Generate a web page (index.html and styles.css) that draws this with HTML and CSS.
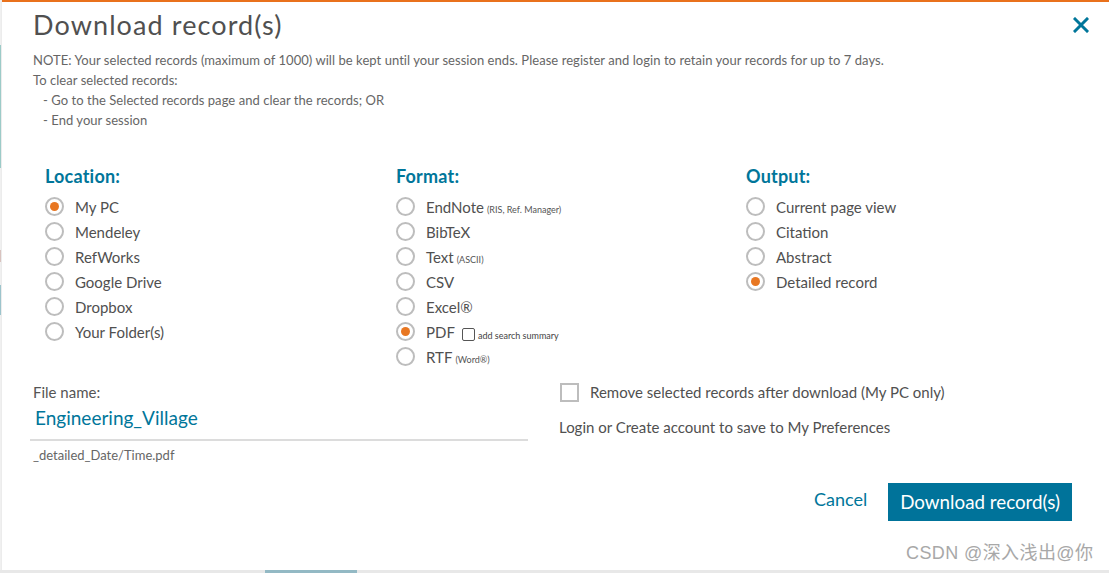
FILE: index.html
```html
<!DOCTYPE html>
<html>
<head>
<meta charset="utf-8">
<link rel="stylesheet" href="styles.css">
</head>
<body>
<div class="edge"></div>
<div class="dialog">
  <div class="topbar"></div>
  <div class="header">
    <h1 class="title">Download record(s)</h1>
    <svg class="close" width="16" height="16" viewBox="0 0 16 16"><path d="M2 2 L14 14 M14 2 L2 14" stroke="#00769a" stroke-width="3" stroke-linecap="square"/></svg>
  </div>
  <div class="note">
    <div>NOTE: Your selected records (maximum of 1000) will be kept until your session ends. Please register and login to retain your records for up to 7 days.</div>
    <div>To clear selected records:</div>
    <div class="indent">- Go to the Selected records page and clear the records; OR</div>
    <div class="indent">- End your session</div>
  </div>

  <div class="columns">
    <div class="col">
      <div class="heading">Location:</div>
      <div class="opts">
        <div class="opt"><span class="radio on"></span>My PC</div>
        <div class="opt"><span class="radio"></span>Mendeley</div>
        <div class="opt"><span class="radio"></span>RefWorks</div>
        <div class="opt"><span class="radio"></span>Google Drive</div>
        <div class="opt"><span class="radio"></span>Dropbox</div>
        <div class="opt"><span class="radio"></span>Your Folder(s)</div>
      </div>
    </div>
    <div class="col">
      <div class="heading">Format:</div>
      <div class="opts">
        <div class="opt"><span class="radio"></span>EndNote<small>(RIS, Ref. Manager)</small></div>
        <div class="opt"><span class="radio"></span>BibTeX</div>
        <div class="opt"><span class="radio"></span>Text<small>(ASCII)</small></div>
        <div class="opt"><span class="radio"></span>CSV</div>
        <div class="opt"><span class="radio"></span>Excel®</div>
        <div class="opt"><span class="radio on"></span>PDF<span class="mini-check"></span><span class="mini-label">add search summary</span></div>
        <div class="opt"><span class="radio"></span>RTF<small>(Word®)</small></div>
      </div>
    </div>
    <div class="col">
      <div class="heading">Output:</div>
      <div class="opts">
        <div class="opt"><span class="radio"></span>Current page view</div>
        <div class="opt"><span class="radio"></span>Citation</div>
        <div class="opt"><span class="radio"></span>Abstract</div>
        <div class="opt"><span class="radio on"></span>Detailed record</div>
      </div>
    </div>
  </div>

  <div class="filerow">
    <div class="file">
      <div class="file-label">File name:</div>
      <div class="file-input">Engineering_Village</div>
      <div class="file-suffix">_detailed_Date/Time.pdf</div>
    </div>
    <div class="prefs">
      <div class="check-row"><span class="checkbox"></span>Remove selected records after download (My PC only)</div>
      <div class="login">Login or Create account to save to My Preferences</div>
    </div>
  </div>

  <div class="actions">
    <span class="cancel">Cancel</span>
    <span class="btn">Download record(s)</span>
  </div>
</div>
<div class="watermark">CSDN @深入浅出@你</div>
<div class="scrollbar"><div class="thumb"></div></div>
</body>
</html>
```

FILE: styles.css
```css
html, body {
  margin: 0;
  padding: 0;
  background: #fff;
}
body {
  width: 1109px;
  height: 573px;
  overflow: hidden;
  position: relative;
  font-family: Lato, "Noto Sans", sans-serif;
  color: #505050;
}
.edge {
  position: absolute;
  left: 0;
  top: 0;
  width: 1px;
  height: 573px;
  background: linear-gradient(to bottom, #f0f0f0 0, #f0f0f0 45px, #9ccbc8 45px, #9ccbc8 168px, #f0f0f0 168px, #f0f0f0 250px, #d9c3bf 250px, #d9c3bf 262px, #f0f0f0 262px, #f0f0f0 285px, #9cc4cc 285px, #9cc4cc 315px, #f0f0f0 315px);
  border-right: 1px solid #ececec;
}
.dialog {
  display: flex;
  flex-direction: column;
}
.topbar {
  height: 2px;
  background: #e9711c;
}
.header {
  height: 48px;
  display: flex;
  align-items: center;
  justify-content: space-between;
  padding: 0 20px 0 33px;
}
.title {
  margin: 0;
  font-weight: 400;
  font-size: 27px;
  letter-spacing: 1.1px;
  color: #505050;
  line-height: 30px;
  margin-top: -3px;
}
.close {
  display: block;
  margin-top: -3px;
}
.note {
  padding-left: 33px;
  font-size: 13px;
  letter-spacing: 0.05px;
  line-height: 20px;
  color: #666;
}
.note .indent {
  padding-left: 10px;
}
.columns {
  margin-top: 36px;
  padding-left: 45px;
  display: grid;
  grid-template-columns: 351px 350px 1fr;
}
.heading {
  font-size: 18px;
  letter-spacing: 0.2px;
  font-weight: 700;
  color: #00769a;
  line-height: 20px;
}
.opts {
  margin-top: 8px;
  display: flex;
  flex-direction: column;
}
.opt {
  height: 25px;
  display: flex;
  align-items: center;
  font-size: 15px;
  color: #505050;
}
.opt small {
  font-size: 9px;
  margin-left: 3px;
  margin-top: 5px;
  color: #555;
}
.radio {
  width: 15px;
  height: 15px;
  border: 2px solid #bdbdbd;
  border-radius: 50%;
  margin-right: 11px;
  flex: none;
  position: relative;
  background: #fff;
}
.radio.on::after {
  content: "";
  position: absolute;
  left: 3px;
  top: 3px;
  width: 9px;
  height: 9px;
  border-radius: 50%;
  background: #e87722;
}
.mini-check {
  width: 11px;
  height: 11px;
  border: 1px solid #555;
  border-radius: 2px;
  margin-left: 7px;
  margin-top: 6px;
}
.mini-label {
  font-size: 9px;
  margin-left: 3px;
  margin-top: 8px;
  color: #444;
}
.filerow {
  margin-top: 13px;
  display: grid;
  grid-template-columns: 559px 1fr;
}
.file {
  padding-left: 33px;
  padding-right: 31px;
}
.file-label {
  font-size: 15px;
  line-height: 20px;
  color: #555;
}
.file-input {
  margin-left: -3px;
  padding-left: 5px;
  font-size: 19px;
  line-height: 26px;
  color: #00769a;
  border-bottom: 2px solid #dcdcdc;
  box-sizing: border-box;
  height: 39px;
  padding-top: 3px;
}
.file-suffix {
  margin-top: 6px;
  font-size: 13px;
  line-height: 16px;
  color: #666;
}
.prefs {
  display: flex;
  flex-direction: column;
}
.check-row {
  display: flex;
  align-items: center;
  font-size: 15px;
  height: 20px;
  color: #505050;
}
.checkbox {
  width: 15px;
  height: 15px;
  border: 2px solid #bdbdbd;
  margin-left: 1px;
  margin-right: 11px;
}
.login {
  margin-top: 15px;
  font-size: 15px;
  line-height: 20px;
}
.actions {
  margin-top: 20px;
  display: flex;
  justify-content: flex-end;
  align-items: center;
  padding-right: 37px;
  gap: 21px;
}
.cancel {
  font-size: 18px;
  color: #00769a;
  margin-top: -6px;
}
.btn {
  background: #00739a;
  color: #fff;
  font-size: 18.8px;
  height: 38px;
  line-height: 38px;
  padding: 0 12px;
}
.watermark {
  position: absolute;
  left: 906px;
  top: 543px;
  font-family: "Liberation Sans", "Noto Sans CJK SC", sans-serif;
  font-size: 18px;
  letter-spacing: 0.4px;
  line-height: 20px;
  color: #a8a8a8;
}
.scrollbar {
  position: absolute;
  left: 0;
  bottom: 0;
  width: 1109px;
  height: 3px;
  background: #e8e8e8;
}
.thumb {
  margin-left: 265px;
  width: 92px;
  height: 3px;
  background: #93b9c4;
}
```
